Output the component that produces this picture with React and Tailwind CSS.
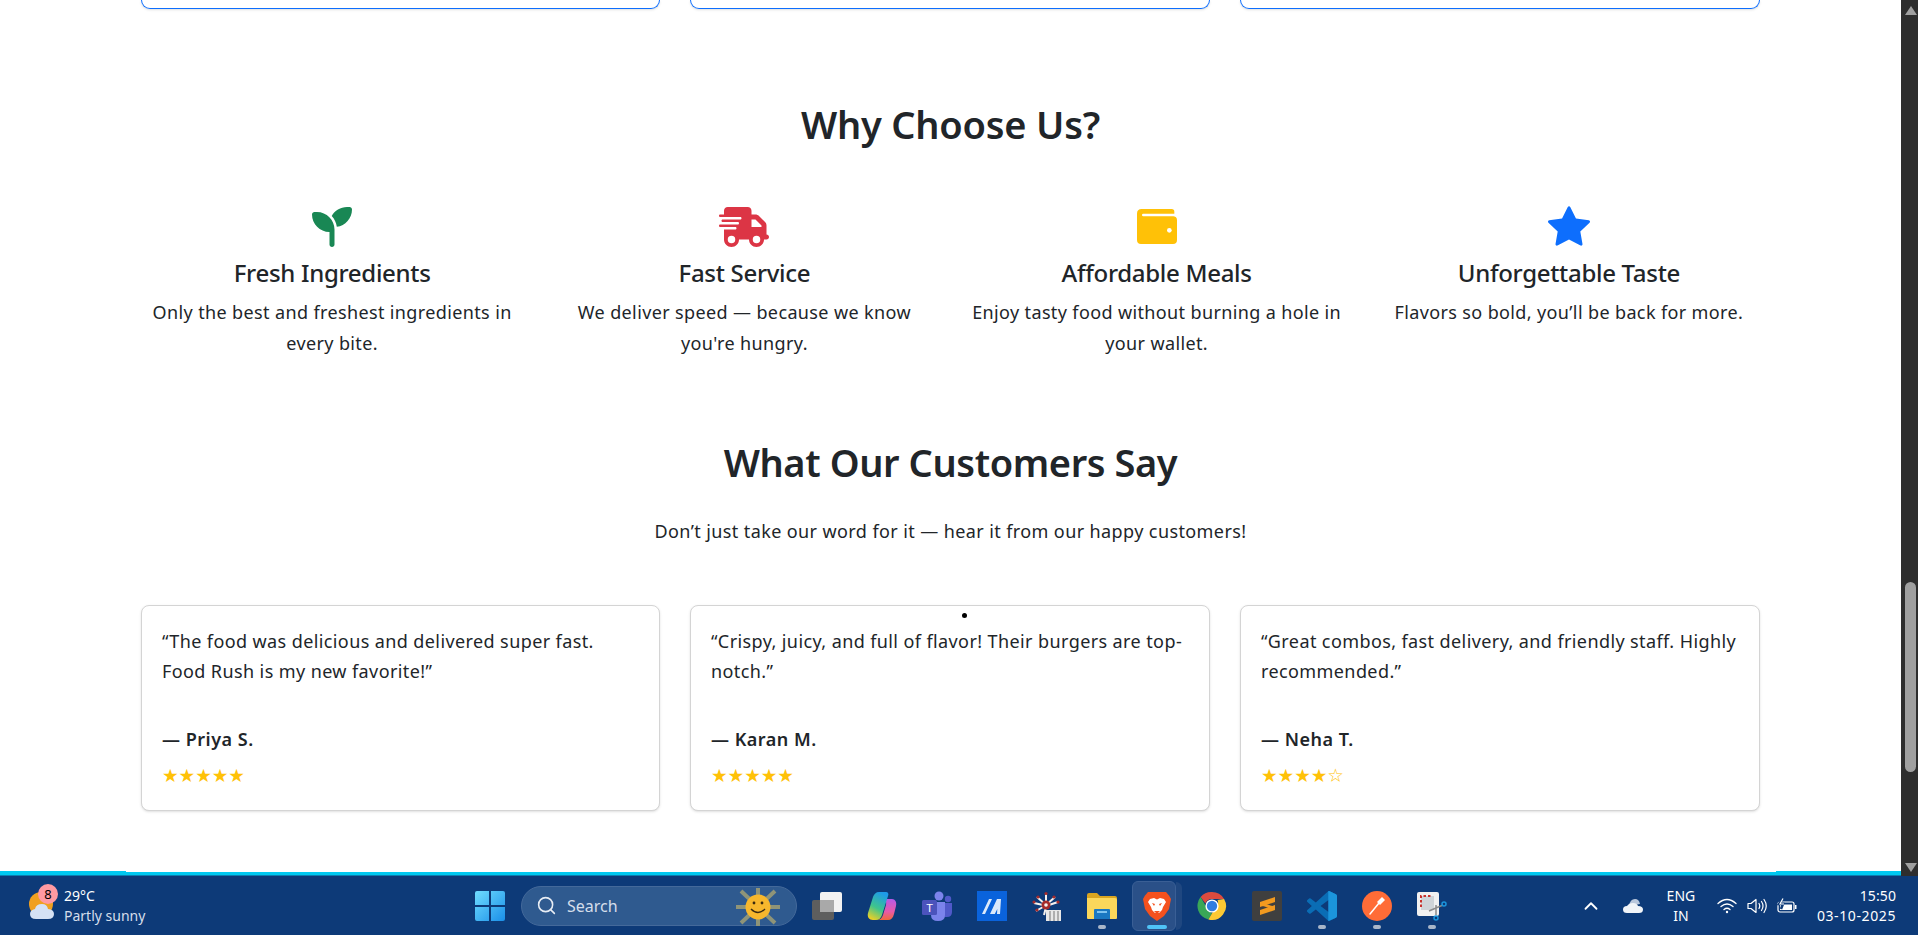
import { FaSeedling, FaTruckFast } from 'react-icons/fa6'
import { BsStarFill } from 'react-icons/bs'
import { Search, ChevronUp } from 'lucide-react'

const Wallet = () => (
  <svg viewBox="0 0 120 105" className="w-[40px] h-[35px] text-[#ffc107]">
    <path fill="currentColor" d="M14 0H104Q112 0 112 8V22H108Q120 22 120 34V93Q120 105 108 105H12Q0 105 0 93V14Q0 0 14 0Z" />
    <rect x="15" y="14" width="110" height="8" rx="4" fill="#fff" />
    <circle cx="97" cy="64" r="7" fill="#fff" />
  </svg>
)

const features = [
  { icon: <FaSeedling className="w-[40px] h-[40px] mt-[2px] text-[#198754]" />, title: 'Fresh Ingredients', text: 'Only the best and freshest ingredients in every bite.' },
  { icon: <FaTruckFast className="w-[50px] h-[40px] mt-[2px] text-[#dc3545]" />, title: 'Fast Service', text: "We deliver speed — because we know you're hungry." },
  { icon: <Wallet />, title: 'Affordable Meals', text: 'Enjoy tasty food without burning a hole in your wallet.' },
  { icon: <BsStarFill className="w-[42px] h-[42px] text-[#0d6efd]" />, title: 'Unforgettable Taste', text: 'Flavors so bold, you’ll be back for more.' },
]

const reviews = [
  { quote: '“The food was delicious and delivered super fast. Food Rush is my new favorite!”', name: '— Priya S.', stars: '★★★★★' },
  { quote: '“Crispy, juicy, and full of flavor! Their burgers are top-notch.”', name: '— Karan M.', stars: '★★★★★' },
  { quote: '“Great combos, fast delivery, and friendly staff. Highly recommended.”', name: '— Neha T.', stars: '★★★★☆' },
]

const WinLogo = () => (
  <svg viewBox="0 0 30 30" className="w-[30px] h-[30px]">
    <defs>
      <linearGradient id="win" x1="0" y1="0" x2="1" y2="1">
        <stop offset="0" stopColor="#6fdcff" />
        <stop offset="1" stopColor="#1a8fe8" />
      </linearGradient>
    </defs>
    <path fill="url(#win)" d="M0 2q0-2 2-2h12v14H0zM16 0h12q2 0 2 2v12H16zM0 16h14v14H2q-2 0-2-2zM16 16h14v12q0 2-2 2H16z" />
  </svg>
)

const TaskView = () => (
  <svg viewBox="0 0 30 30" className="w-[30px] h-[30px]">
    <rect x="0" y="9" width="22" height="20" rx="2" fill="#5e5e5e" />
    <rect x="8" y="1" width="22" height="20" rx="2" fill="#f2f2f2" />
    <rect x="8" y="9" width="14" height="12" fill="#a9a9a9" />
  </svg>
)

const Copilot = () => (
  <svg viewBox="0 0 30 30" className="w-[30px] h-[30px]">
    <defs>
      <linearGradient id="cpa" x1="0.6" y1="0" x2="0.2" y2="1">
        <stop offset="0" stopColor="#1e9be8" />
        <stop offset="0.55" stopColor="#3fc58c" />
        <stop offset="1" stopColor="#f5d020" />
      </linearGradient>
      <linearGradient id="cpb" x1="0.5" y1="0" x2="0.5" y2="1">
        <stop offset="0" stopColor="#b45ae8" />
        <stop offset="0.6" stopColor="#e85aa8" />
        <stop offset="1" stopColor="#f0683a" />
      </linearGradient>
    </defs>
    <path fill="url(#cpb)" d="M17 8h8c3 0 5 3 4 7l-2 8c-1 4-3 6-6 6H10c3 0 5-2 6-5l3-10c.5-3 0-5-2-6z" />
    <path fill="url(#cpa)" d="M12 1h7c2 0 3 2 2 4l-6 19c-1 3-3 5-6 5H6c-4 0-6-3-5-7L6 6c1-3 3-5 6-5z" />
  </svg>
)

const Teams = () => (
  <svg viewBox="0 0 30 30" className="w-[30px] h-[30px]">
    <circle cx="17" cy="5" r="4.5" fill="#7b83eb" />
    <circle cx="26" cy="8" r="3.2" fill="#5059c9" />
    <path fill="#5059c9" d="M21 12h9v9q0 5-5 5h-4z" />
    <path fill="#7b83eb" d="M9 11h14v13q0 6-7 6t-7-6z" />
    <rect x="0" y="9" width="15" height="15" rx="1.5" fill="#4b53bc" />
    <text x="7.5" y="21" textAnchor="middle" fontSize="11" fontFamily="Liberation Sans" fill="#fff">T</text>
  </svg>
)

const MaLogo = () => (
  <svg viewBox="0 0 30 30" className="w-[30px] h-[30px]">
    <rect width="30" height="30" fill="#0a63dc" />
    <path fill="#dbe9fb" d="M5 23l7-15h3L8 23zM13 23l7-15h4l-1 15h-3l.3-5-2.5 5z" />
  </svg>
)

const Flower = () => (
  <svg viewBox="0 0 30 30" className="w-[30px] h-[30px]">
    <g fill="none" stroke="#f5f0ee" strokeWidth="2">
      <path d="M14 3v8M14 14L5 6M14 14l9-8M2 12l9 2M26 11l-9 3M4 20l7-4M12 24l2-8" />
    </g>
    <g fill="#a52a2a">
      <circle cx="14" cy="14" r="4.5" />
      <circle cx="14" cy="2.500" r="1.600" />
      <circle cx="6" cy="6" r="1.600" />
      <circle cx="22" cy="6" r="1.600" />
      <circle cx="2" cy="11" r="1.600" />
      <circle cx="26" cy="11" r="1.600" />
      <circle cx="5" cy="19" r="1.600" />
    </g>
    <circle cx="14" cy="14" r="1.800" fill="#f5f0ee" />
    <rect x="14" y="19" width="15" height="11" fill="#e8e8e8" />
    <path stroke="#777" strokeWidth="1" d="M18 20v10M22 20v10M26 20v10" />
  </svg>
)

const Folder = () => (
  <svg viewBox="0 0 30 30" className="w-[30px] h-[30px]">
    <path fill="#d9a520" d="M0 4q0-2 2-2h8l3 3h15q2 0 2 2v4H0z" />
    <path fill="#fbd75b" d="M0 7h28q2 0 2 2v18q0 1-1 1H1q-1 0-1-1z" />
    <path fill="#1a78c2" d="M7 19q0-1 1-1h14q1 0 1 1v9H7z" />
    <rect x="10" y="20" width="10" height="2" fill="#7fc4f0" />
  </svg>
)

const Brave = () => (
  <svg viewBox="0 0 30 30" className="w-[30px] h-[30px]">
    <path fill="#f4511e" d="M6 1h18l3 3.500L29 8l-2 10-5 7-7 5-7-5-5-7L1 8l2-3.500z" />
    <path fill="#fff" d="M8 8l4-1 3 1.500L18 7l4 1 2 3-3 5-1 3-3 3h-4l-3-3-1-3-3-5z" />
    <path fill="#f4511e" d="M10 12l3 1-1 2zM20 12l-3 1 1 2zM12 20h6l-3 3z" />
  </svg>
)

const Chrome = () => (
  <svg viewBox="0 0 30 30" className="w-[30px] h-[30px]">
    <path fill="#dd4b3e" d="M15 1a14 14 0 0 1 12.100 7H15a7 7 0 0 0-6.600 4.600L3.600 6A14 14 0 0 1 15 1z" />
    <path fill="#3aa757" d="M3.600 6l6 10.500A7 7 0 0 0 15 22l-3.600 6.500A14 14 0 0 1 3.600 6z" />
    <path fill="#fcc934" d="M27.100 8A14 14 0 0 1 11.400 28.500L17.500 18A7 7 0 0 0 20.500 9z" />
    <circle cx="15" cy="15" r="6.600" fill="#fff" />
    <circle cx="15" cy="15" r="5.200" fill="#2f7de1" />
  </svg>
)

const Sublime = () => (
  <svg viewBox="0 0 30 30" className="w-[30px] h-[30px]">
    <rect width="30" height="30" rx="2" fill="#3f3f3f" />
    <path fill="#f29a1f" d="M23 6v5L8 16v-5zM23 14v5L8 24v-5zM8 11l15 5v3L8 14z" />
  </svg>
)

const VsCode = () => (
  <svg viewBox="0 0 24 24" className="w-[30px] h-[30px]">
    <defs>
      <clipPath id="vsright"><rect x="17" y="0" width="7" height="24" /></clipPath>
    </defs>
    <path fill="#0a6db5" d="M23.150 2.587L18.210.21a1.494 1.494 0 0 0-1.705.29l-9.460 8.630-4.120-3.128a.999.999 0 0 0-1.276.057L.327 7.261A1 1 0 0 0 .326 8.740L3.899 12 .326 15.260a1 1 0 0 0 .001 1.479L1.650 17.940a.999.999 0 0 0 1.276.057l4.120-3.128 9.460 8.630a1.492 1.492 0 0 0 1.704.29l4.942-2.377A1.500 1.500 0 0 0 24 20.060V3.939a1.500 1.500 0 0 0-.850-1.352zm-5.146 14.861L10.826 12l7.178-5.448v10.896z" />
    <path clipPath="url(#vsright)" fill="#1b95dc" d="M23.150 2.587L18.210.21a1.494 1.494 0 0 0-1.705.29L16 24l1.800-.2 5.350-2.387A1.500 1.500 0 0 0 24 20.060V3.939a1.500 1.500 0 0 0-.850-1.352zm-5.146 14.861V6.552z" />
  </svg>
)

const Postman = () => (
  <svg viewBox="0 0 30 30" className="w-[30px] h-[30px]">
    <circle cx="15" cy="15" r="15" fill="#ff6c37" />
    <path fill="none" stroke="#fff" strokeWidth="1.500" strokeLinecap="round" d="M8 23l9-11" />
    <path fill="#fff" d="M15 11l5-5 3 3-5 5z" />
  </svg>
)

const Snip = () => (
  <svg viewBox="0 0 30 30" className="w-[30px] h-[30px]">
    <rect x="0" y="1" width="22" height="24" rx="2" fill="#f1f1f1" />
    <rect x="4" y="5" width="13" height="14" fill="#cfd4d8" />
    <path fill="none" stroke="#c8322e" strokeWidth="2" strokeDasharray="2.500 2" d="M4 16V5h11" />
    <path stroke="#8b8b8b" strokeWidth="1.500" d="M26 14L12 20M19 14v10" />
    <circle cx="27" cy="13" r="2" fill="none" stroke="#1b95dc" strokeWidth="1.500" />
    <circle cx="19" cy="27" r="2" fill="none" stroke="#1b95dc" strokeWidth="1.500" />
  </svg>
)

const WeatherIcon = () => (
  <svg viewBox="0 0 28 28" className="w-[28px] h-[28px]">
    <circle cx="13" cy="12" r="12" fill="#f0a020" />
    <path fill="#d5e2f5" d="M8 27q-6 0-6-5 0-4 5-5 1-5 7-5 5 0 6 5 6 .5 6 5 0 5-6 5z" />
  </svg>
)

const Smiley = () => (
  <svg viewBox="0 0 48 40" className="w-[48px] h-[40px]">
    <g stroke="#8f9478" strokeWidth="4">
      <path d="M24 1v38M2 20h44M7 4l34 32M41 4L7 36" />
    </g>
    <circle cx="24" cy="20" r="12.500" fill="#f7b72d" />
    <circle cx="20" cy="16" r="1.400" fill="#3a2a10" />
    <circle cx="28" cy="16" r="1.400" fill="#3a2a10" />
    <path d="M17 22q7 7 14 0" fill="none" stroke="#3a2a10" strokeWidth="1.400" />
  </svg>
)

const Cloud = () => (
  <svg viewBox="0 0 20 15" className="w-[20px] h-[15px]">
    <path fill="#b9c7dc" d="M6 8q1-7 6-7 4 0 5 5z" />
    <path fill="#f1f4f8" d="M4 15q-4 0-4-3.500Q0 8 4 8q2-3 6-3 4 0 5 3 5 0 5 3.500T16 15z" />
  </svg>
)

const Wifi = () => (
  <svg viewBox="0 0 20 16" className="w-[20px] h-[16px]" fill="none" stroke="#fff" strokeWidth="1.300" strokeLinecap="round">
    <path d="M1 5.500q9-8 18 0M4 8.500q6-5 12 0M7 11.500q3-2.500 6 0" />
    <circle cx="10" cy="14" r="1.200" fill="#fff" stroke="none" />
  </svg>
)

const Speaker = () => (
  <svg viewBox="0 0 20 16" className="w-[20px] h-[16px]" fill="none" stroke="#fff" strokeWidth="1.200" strokeLinecap="round">
    <path d="M1 5.500h3L9 1.500v13L4 10.500H1z" strokeLinejoin="round" />
    <path d="M12 5.500q1.500 2.500 0 5M14.500 3.500q3 4.500 0 9M17 1.500q4.500 6.500 0 13" />
  </svg>
)

const Battery = () => (
  <svg viewBox="0 0 20 16" className="w-[20px] h-[16px]" fill="none" stroke="#fff" strokeWidth="1.200">
    <rect x="1" y="4" width="16" height="10" rx="2" />
    <rect x="3" y="6.500" width="12" height="5.500" fill="#fff" stroke="none" />
    <rect x="18" y="7" width="1.500" height="4" fill="#fff" stroke="none" />
    <path d="M6 0L2 6h4L4 11" stroke="#0d3a78" strokeWidth="2.500" />
    <path d="M6 0.500L3 6h4" stroke="#fff" />
  </svg>
)

const taskIcons = [
  { el: <TaskView /> },
  { el: <Copilot /> },
  { el: <Teams /> },
  { el: <MaLogo /> },
  { el: <Flower /> },
  { el: <Folder />, dot: true },
  { el: <Brave />, active: true },
  { el: <Chrome /> },
  { el: <Sublime /> },
  { el: <VsCode />, dot: true },
  { el: <Postman />, dot: true },
  { el: <Snip />, dot: true },
]

const Taskbar = () => (
  <div className="h-[59px] bg-[#0d3a78] flex items-center text-white font-['Noto_Sans',sans-serif] relative">
    {/* Weather */}
    <div className="relative w-[475px] h-full flex items-center pl-[28px] shrink-0">
      <WeatherIcon />
      <span className="absolute left-[38px] top-[8px] w-[20px] h-[20px] rounded-full bg-[#ff9aa2] text-black text-[13px] leading-[20px] text-center">8</span>
      <div className="ml-[8px] text-[14px] leading-[20px]">
        <div>29°C</div>
        <div className="text-[#d5deeb]">Partly sunny</div>
      </div>
    </div>

    {/* Start + search */}
    <WinLogo />
    <div className="ml-[16px] w-[276px] h-[40px] rounded-full bg-[#2f5a8f] border border-[#44699a] flex items-center pl-[14px] shrink-0 relative">
      <Search className="w-[21px] h-[21px] text-[#e8edf4]" strokeWidth={1.800} />
      <span className="ml-[10px] text-[16px] text-[#d5deeb]">Search</span>
      <div className="absolute right-[14px] top-0"><Smiley /></div>
    </div>

    {/* App icons */}
    <div className="ml-[15px] flex gap-[25px] shrink-0">
      {taskIcons.map((t, i) => (
        <div key={i} className="relative w-[30px] h-[30px]">
          {t.active && (
            <>
              <div className="absolute left-[34px] top-[-9px] w-[6px] h-[48px] rounded-r-md bg-[#1f4780]" />
              <div className="absolute left-[-10px] top-[-10px] w-[44px] h-[50px] rounded-md bg-[#2a5088] border border-[#3a5f95]" />
            </>
          )}
          <div className="relative">{t.el}</div>
          {t.dot && <div className="absolute left-[11px] top-[34px] w-[8px] h-[4px] rounded-full bg-[#a9b6c9]" />}
          {t.active && <div className="absolute left-[5px] top-[34px] w-[20px] h-[4px] rounded-full bg-[#4fc3f7]" />}
        </div>
      ))}
    </div>

    {/* Tray */}
    <div className="ml-auto flex items-center pr-[22px]">
      <ChevronUp className="w-[22px] h-[22px] text-white" strokeWidth={2} />
      <div className="ml-[21px]"><Cloud /></div>
      <div className="ml-[22px] w-[32px] text-center text-[14px] leading-[20px]">
        <div>ENG</div>
        <div>IN</div>
      </div>
      <div className="ml-[20px] flex gap-[10px]">
        <Wifi />
        <Speaker />
        <Battery />
      </div>
      <div className="ml-[20px] text-right text-[14px] leading-[20px]">
        <div className="tracking-[0.1px]">15:50</div>
        <div className="tracking-[0.6px]">03-10-2025</div>
      </div>
    </div>
  </div>
)

const Scrollbar = () => (
  <div className="w-[17px] shrink-0 bg-[#2e2e2e] flex flex-col items-center pt-[6px] pl-[2px]">
    <div className="w-0 h-0 border-x-[6px] border-x-transparent border-b-[9px] border-b-[#a0a0a0]" />
    <div className="mt-[567px] w-[11px] h-[190px] rounded-full bg-[#a0a0a0]" />
    <div className="mt-auto mb-[4px] w-0 h-0 border-x-[6px] border-x-transparent border-t-[9px] border-t-[#a0a0a0]" />
  </div>
)

export default function App() {
  return (
    <div className="w-[1918px] h-[935px] overflow-hidden flex flex-col bg-white">
      <div className="flex h-[876px] shrink-0">
        <div className="flex-1 min-w-0 flex flex-col">
          <main className="h-[871px] shrink-0 px-[141px] text-[#212529] font-['Noto_Sans',sans-serif] relative">
            {/* Bottom of the menu cards from the section above */}
            <div className="grid grid-cols-[519px_520px_520px] gap-[30px]">
              {[0, 1, 2].map((i) => (
                <div key={i} className="h-[9px] border border-t-0 border-[#0d6efd] rounded-b-[10px] shadow-sm" />
              ))}
            </div>

            <h2 className="mt-[91px] text-center text-[38px] leading-[48px] font-semibold tracking-[-0.2px]">Why Choose Us?</h2>

            <div className="mt-[57px] mx-[-15px] grid grid-cols-4">
              {features.map((f) => (
                <div key={f.title} className="text-center px-[12px]">
                  <div className="h-[42px] flex items-center justify-center">{f.icon}</div>
                  <h4 className="mt-[11px] text-[24px] leading-[29px] font-medium tracking-[-0.3px]">{f.title}</h4>
                  <p className="mt-[10px] text-[18px] leading-[30.6px] tracking-[0.37px]">{f.text}</p>
                </div>
              ))}
            </div>

            <h2 className="mt-[80px] text-center text-[38px] leading-[48px] font-semibold tracking-[-0.4px]">What Our Customers Say</h2>
            <p className="mt-[30px] text-center text-[18px] leading-[30.6px] tracking-[0.4px]">Don’t just take our word for it — hear it from our happy customers!</p>

            <div className="mt-[58px] grid grid-cols-[519px_520px_520px] gap-[30px]">
              {reviews.map((r) => (
                <div key={r.name} className="h-[206px] border border-[#d4d4d4] rounded-[8px] shadow-sm p-[20px] bg-white">
                  <p className="text-[18px] leading-[30.6px] tracking-[0.4px]">{r.quote}</p>
                  <p className="mt-[37px] text-[18px] leading-[30.6px] font-semibold tracking-[0.5px]">{r.name}</p>
                  <p className="mt-[6px] text-[#ffc107] text-[18.5px] leading-[30px] font-['DejaVu_Sans',sans-serif]">{r.stars}</p>
                </div>
              ))}
            </div>

            {/* stray cursor dot */}
            <div className="absolute left-[962px] top-[613px] w-[5px] h-[5px] rounded-full bg-black" />
          </main>
          <div className="h-[5px] bg-[#00c8f0] border-b border-[#0a7fb0] relative">
            <div className="absolute left-[126px] top-0 w-[1650px] h-px bg-white" />
          </div>
        </div>
        <Scrollbar />
      </div>
      <Taskbar />
    </div>
  )
}
